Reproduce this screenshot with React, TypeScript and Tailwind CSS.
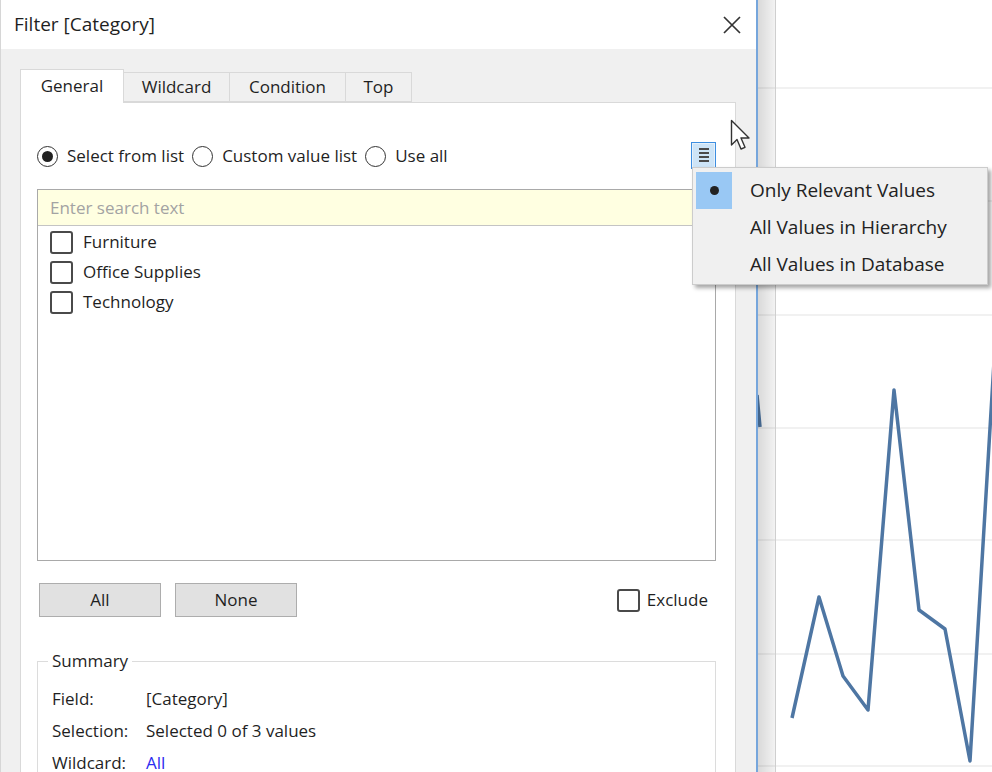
import React from 'react';

const font = { fontFamily: '"Open Sans", "Noto Sans", Arial, sans-serif' };

const Radio = ({ checked, label }: { checked?: boolean; label: string }) => (
  <label className="flex items-center gap-[9px]">
    <span className="w-[21px] h-[21px] rounded-full border-[1.5px] border-[#333] bg-white flex items-center justify-center">
      {checked && <span className="w-[11px] h-[11px] rounded-full bg-[#222]" />}
    </span>
    <span>{label}</span>
  </label>
);

const Check = () => (
  <span className="w-[23px] h-[23px] rounded-[3px] border-2 border-[#4a4a4a] bg-white shrink-0" />
);

const Chart = () => {
  const grid = [88, 201, 315, 428, 540, 654, 766];
  const pts = [
    [34, 718],
    [61, 597],
    [85, 676],
    [110, 710],
    [136, 390],
    [161, 610],
    [187, 629],
    [212, 761],
    [242, 262],
  ];
  return (
    <div className="relative flex-1 bg-white overflow-hidden">
      <svg width="234" height="772" className="absolute left-0 top-0">
        {grid.map((y) => (
          <line key={y} x1="0" x2="234" y1={y} y2={y} stroke="#ededed" strokeWidth="1.5" />
        ))}
        <polyline
          points={pts.map((p) => p.join(',')).join(' ')}
          fill="none"
          stroke="#4e76a3"
          strokeWidth="3.5"
          strokeLinejoin="round"
        />
        <polyline points="-1,395 2,427" fill="none" stroke="#4e76a3" strokeWidth="3.5" />
      </svg>
      {/* window shadow */}
      <div className="absolute left-0 top-0 h-full w-[18px] bg-gradient-to-r from-black/15 to-black/5 border-r border-[#cfcfcf]" />
    </div>
  );
};

export default function App() {
  return (
    <div className="relative w-[992px] h-[772px] flex overflow-hidden bg-white text-[#1f1f1f]" style={font}>
      {/* Dialog */}
      <div className="w-[758px] h-full flex flex-col border-l border-[#d6d6d6] border-r-2 border-r-[#76a6dc] shrink-0 overflow-hidden">
        <div className="h-[49px] shrink-0 bg-white flex items-center justify-between pl-[13px] pr-[14px]">
          <span className="text-[19px]">Filter [Category]</span>
          <svg width="20" height="20" viewBox="0 0 20 20">
            <path d="M2 2 L18 18 M18 2 L2 18" stroke="#333" strokeWidth="1.7" />
          </svg>
        </div>

        <div className="flex-1 min-h-0 bg-[#f0f0f0] pl-[19px] pr-[20px] pt-[19px] flex flex-col">
          {/* Tabs */}
          <div className="flex items-end h-[34px] shrink-0 text-[17px]">
            <div className="w-[104px] h-[34px] bg-white border border-[#d9d9d9] border-b-0 flex items-center justify-center relative z-10 -mb-px pb-[2px]">
              General
            </div>
            <div className="w-[106px] h-[30px] border border-[#d9d9d9] border-l-0 flex items-center justify-center">
              Wildcard
            </div>
            <div className="w-[116px] h-[30px] border border-[#d9d9d9] border-l-0 flex items-center justify-center">
              Condition
            </div>
            <div className="w-[66px] h-[30px] border border-[#d9d9d9] border-l-0 flex items-center justify-center">
              Top
            </div>
          </div>

          {/* Tab panel */}
          <div className="flex-1 bg-white border border-[#d9d9d9] border-b-0 pl-[16px] pt-[39px] text-[17px]">
            <div className="w-[679px] flex items-center justify-between h-[28px]">
              <div className="flex items-center gap-[8px]">
                <Radio checked label="Select from list" />
                <Radio label="Custom value list" />
                <Radio label="Use all" />
              </div>
              <div className="w-[25px] h-[27px] border border-[#3d8ee0] bg-[#cde4f7] shadow-[inset_0_0_0_1px_#e6f1fb] flex flex-col items-center justify-center gap-[2px] mt-[-2px]">
                <span className="w-[10px] h-[2px] bg-[#4a4a4a]" />
                <span className="w-[10px] h-[2px] bg-[#4a4a4a]" />
                <span className="w-[10px] h-[2px] bg-[#4a4a4a]" />
                <span className="w-[10px] h-[2px] bg-[#4a4a4a]" />
              </div>
            </div>

            {/* List box */}
            <div className="mt-[19px] w-[679px] h-[372px] border border-[#a9a9a9] flex flex-col">
              <div className="h-[36px] bg-[#ffffe1] border-b border-[#c4c4c4] flex items-center pl-[12px] text-[#a3a3a3]">
                Enter search text
              </div>
              <div className="pt-[1px] pl-[12px] flex flex-col">
                {['Furniture', 'Office Supplies', 'Technology'].map((v) => (
                  <div key={v} className="h-[30px] flex items-center gap-[10px]">
                    <Check />
                    <span>{v}</span>
                  </div>
                ))}
              </div>
            </div>

            {/* Buttons */}
            <div className="mt-[22px] w-[679px] flex items-center">
              <button className="ml-[2px] w-[122px] h-[34px] bg-[#e1e1e1] border border-[#adadad]">All</button>
              <button className="ml-[14px] w-[122px] h-[34px] bg-[#e1e1e1] border border-[#adadad]">None</button>
              <div className="ml-auto flex items-center gap-[7px] pr-[8px]">
                <Check />
                <span>Exclude</span>
              </div>
            </div>

            {/* Summary */}
            <div className="relative mt-[44px] w-[679px] h-[140px] border border-[#dcdcdc] pt-[21px] pl-[14px]">
              <span className="absolute left-[10px] top-[-13px] bg-white px-[4px] leading-[24px]">Summary</span>
              {[
                ['Field:', '[Category]'],
                ['Selection:', 'Selected 0 of 3 values'],
                ['Wildcard:', 'All'],
              ].map(([k, v]) => (
                <div key={k} className="h-[32px] flex items-center">
                  <span className="w-[94px]">{k}</span>
                  <span className={k === 'Wildcard:' ? 'text-[#2c2cf0]' : ''}>{v}</span>
                </div>
              ))}
            </div>
          </div>
        </div>
      </div>

      <Chart />

      {/* Values dropdown menu */}
      <div className="absolute left-[692px] top-[167px] w-[296px] h-[118px] bg-[#f0f0f0] border border-[#cccccc] shadow-[3px_3px_4px_rgba(0,0,0,0.35)] pt-[4px] px-[3px] flex flex-col text-[19px] text-[#222]">
        {[
          ['Only Relevant Values', true],
          ['All Values in Hierarchy', false],
          ['All Values in Database', false],
        ].map(([label, on]) => (
          <div key={label as string} className="h-[37px] flex items-center">
            <div className={`w-[36px] h-[37px] flex items-center justify-center ${on ? 'bg-[#99c8f4]' : ''}`}>
              {on && <span className="w-[9px] h-[9px] rounded-full bg-[#222]" />}
            </div>
            <span className="ml-[18px]">{label as string}</span>
          </div>
        ))}
      </div>

      {/* Mouse cursor */}
      <svg className="absolute left-[730px] top-[119px]" width="24" height="34" viewBox="0 0 24 34">
        <path d="M1.5 1.5 L1.5 26 L7 20.5 L11 30 L15 28.3 L11 19 L19 19 Z" fill="#fff" stroke="#333" strokeWidth="1.4" strokeLinejoin="round" />
      </svg>
    </div>
  );
}
